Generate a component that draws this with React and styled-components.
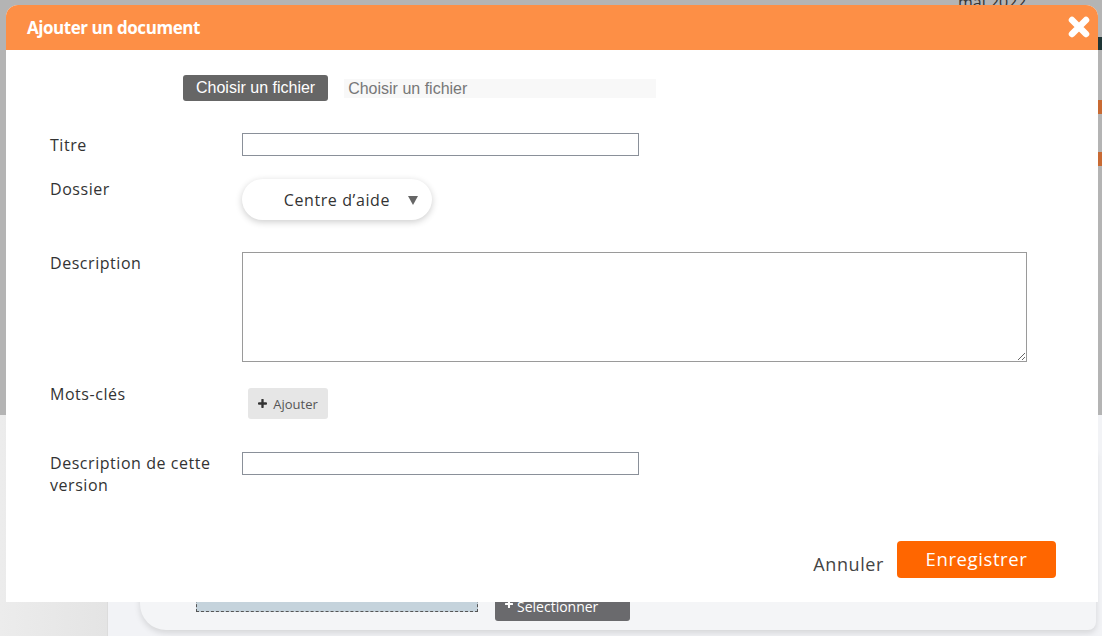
import styled, { createGlobalStyle } from "styled-components";

const GlobalStyle = createGlobalStyle`
  html, body {
    margin: 0;
    padding: 0;
    overflow: hidden;
  }
  body {
    font-family: "Open Sans", "Liberation Sans", sans-serif;
  }
`;

const Screen = styled.div`
  position: relative;
  width: 1102px;
  height: 636px;
  overflow: hidden;
  display: flex;
  flex-direction: column;
`;

/* ---- app behind the modal ---- */

const ShadeTop = styled.div`
  height: 415px;
  background: #b4b4b4;
  display: flex;
  justify-content: flex-end;
`;

const RightEdge = styled.div`
  width: 4px;
  display: flex;
  flex-direction: column;
  padding-top: 37px;
`;

const EdgeBit = styled.div`
  height: ${(p) => p.$h}px;
  margin-bottom: ${(p) => p.$mb}px;
  background: ${(p) => p.$color};
`;

const DateText = styled.span`
  position: absolute;
  top: -9px;
  left: 958px;
  font-size: 16px;
  color: #333;
`;

const Lower = styled.div`
  flex: 1;
  display: flex;
`;

const Gutter = styled.div`
  width: 107px;
  background: linear-gradient(90deg, #ececec, #e4e4e4);
  border-right: 1px solid #dcdcdc;
`;

const Main = styled.div`
  flex: 1;
  background: #f2f3f6;
  display: flex;
  align-items: flex-end;
  padding: 0 6px 6px 32px;
`;

const Card = styled.div`
  flex: 1;
  height: 170px;
  background: #f4f5f7;
  border-radius: 0 0 8px 26px;
  box-shadow: 0 3px 6px rgba(0, 0, 0, 0.12);
  display: flex;
  align-items: flex-end;
  gap: 17px;
  padding: 0 0 9px 56px;
`;

const DropZone = styled.div`
  width: 280px;
  height: 30px;
  margin-bottom: 9px;
  background: #c5d3dc;
  border: 1px dashed #555;
`;

const SelectButton = styled.div`
  width: 135px;
  height: 30px;
  background: #6a6a6d;
  border-radius: 3px;
  color: #fff;
  font-size: 14px;
  display: flex;
  align-items: flex-start;
  padding: 9px 0 0 10px;
  box-sizing: border-box;
  gap: 4px;
  line-height: 1;
`;

/* ---- modal ---- */

const Modal = styled.div`
  position: absolute;
  left: 6px;
  top: 5px;
  width: 1092px;
  height: 597px;
  background: #fff;
  border-radius: 12px 12px 0 0;
  display: flex;
  flex-direction: column;
  color: #333;
`;

const Header = styled.div`
  height: 45px;
  background: #fd8f46;
  border-radius: 12px 12px 0 0;
  display: flex;
  align-items: center;
  justify-content: space-between;
  padding: 0 8px 0 21px;
`;

const Title = styled.h2`
  margin: 0;
  font-size: 17px;
  font-weight: 700;
  color: #fff;
  letter-spacing: -0.45px;
`;

const CloseButton = styled.button`
  border: 0;
  background: none;
  padding: 0;
  width: 22px;
  height: 22px;
  display: flex;
  margin-top: -2px;
`;

const Body = styled.div`
  flex: 1;
  display: flex;
  flex-direction: column;
  padding: 25px 42px 24px 44px;
`;

const Row = styled.div`
  display: flex;
  align-items: flex-start;
  margin-top: ${(p) => p.$gap || 0}px;
`;

const Label = styled.label`
  width: 192px;
  flex-shrink: 0;
  font-size: 16px;
  line-height: 22px;
  letter-spacing: 0.55px;
  color: #333;
  margin-top: ${(p) => p.$shift || 0}px;
`;

const FileButton = styled.div`
  margin-left: 133px;
  height: 26px;
  padding: 0 13px;
  background: #666;
  border-radius: 3px;
  color: #fff;
  font-family: "Liberation Sans", Arial, sans-serif;
  font-size: 16px;
  display: flex;
  align-items: center;
`;

const FileName = styled.div`
  margin: 4px 0 0 16px;
  width: 308px;
  height: 19px;
  padding-left: 4px;
  background: #f8f8f8;
  color: #777;
  font-family: "Liberation Sans", Arial, sans-serif;
  font-size: 16px;
  line-height: 19px;
`;

const TextInput = styled.input`
  width: 397px;
  height: 23px;
  box-sizing: border-box;
  border: 1px solid #8a9099;
  margin: 0;
  padding: 0 4px;
`;

const SelectPill = styled.div`
  width: 190px;
  height: 41px;
  border-radius: 21px;
  background: #fff;
  box-shadow: 0 2px 7px rgba(0, 0, 0, 0.2);
  display: flex;
  align-items: center;
  justify-content: flex-end;
  gap: 18px;
  padding-right: 14px;
  box-sizing: border-box;
  font-size: 16px;
  letter-spacing: 0.6px;
  color: #333;
`;

const TextArea = styled.textarea`
  width: 785px;
  height: 110px;
  box-sizing: border-box;
  border: 1px solid #9a9a9a;
  margin: 0;
  resize: both;
`;

const AddButton = styled.div`
  margin: 4px 0 0 6px;
  width: 80px;
  height: 31px;
  background: #e6e6e6;
  border-radius: 3px;
  display: flex;
  align-items: center;
  justify-content: center;
  gap: 6px;
  font-size: 13px;
  color: #555;
`;

const Footer = styled.div`
  margin-top: auto;
  display: flex;
  justify-content: flex-end;
  align-items: center;
  gap: 13px;
`;

const CancelLink = styled.span`
  font-size: 18px;
  letter-spacing: 0.6px;
  color: #444;
  margin-top: 8px;
`;

const SaveButton = styled.button`
  width: 159px;
  height: 37px;
  border: 0;
  border-radius: 4px;
  background: #ff6600;
  color: #fff;
  font-family: "Open Sans", sans-serif;
  font-size: 18.5px;
  letter-spacing: 0.6px;
  padding: 0 0 2px;
`;

const Plus = ({ size = 9, color = "#333" }) => (
  <svg width={size} height={size} viewBox="0 0 10 10">
    <path d="M5 1v8M1 5h8" stroke={color} strokeWidth="2.6" strokeLinecap="round" />
  </svg>
);

export default function App() {
  return (
    <>
      <GlobalStyle />
      <Screen>
        <ShadeTop>
          <DateText>mai 2022</DateText>
          <RightEdge>
            <EdgeBit $h={13} $mb={50} $color="#1e3535" />
            <EdgeBit $h={14} $mb={38} $color="#c86a33" />
            <EdgeBit $h={14} $mb={0} $color="#c86a33" />
          </RightEdge>
        </ShadeTop>
        <Lower>
          <Gutter />
          <Main>
            <Card>
              <DropZone />
              <SelectButton>
                <Plus size={8} color="#fff" />
                Selectionner
              </SelectButton>
            </Card>
          </Main>
        </Lower>

        <Modal>
          <Header>
            <Title>Ajouter un document</Title>
            <CloseButton aria-label="Fermer">
              <svg width="22" height="22" viewBox="0 0 22 22">
                <path d="M4 4L18 18M18 4L4 18" stroke="#fff" strokeWidth="6.5" strokeLinecap="round" />
              </svg>
            </CloseButton>
          </Header>
          <Body>
            <Row>
              <FileButton>Choisir un fichier</FileButton>
              <FileName>Choisir un fichier</FileName>
            </Row>
            <Row $gap={32}>
              <Label $shift={1}>Titre</Label>
              <TextInput type="text" />
            </Row>
            <Row $gap={23}>
              <Label $shift={-1}>Dossier</Label>
              <SelectPill>
                Centre d’aide
                <svg width="10" height="10" viewBox="0 0 10 10">
                  <path d="M0 1h10L5 10z" fill="#666" />
                </svg>
              </SelectPill>
            </Row>
            <Row $gap={32}>
              <Label $shift={0}>Description</Label>
              <TextArea />
            </Row>
            <Row $gap={22}>
              <Label $shift={-1}>Mots-clés</Label>
              <AddButton>
                <Plus />
                Ajouter
              </AddButton>
            </Row>
            <Row $gap={33}>
              <Label $shift={0}>Description de cette version</Label>
              <TextInput type="text" />
            </Row>
            <Footer>
              <CancelLink>Annuler</CancelLink>
              <SaveButton>Enregistrer</SaveButton>
            </Footer>
          </Body>
        </Modal>
      </Screen>
    </>
  );
}
